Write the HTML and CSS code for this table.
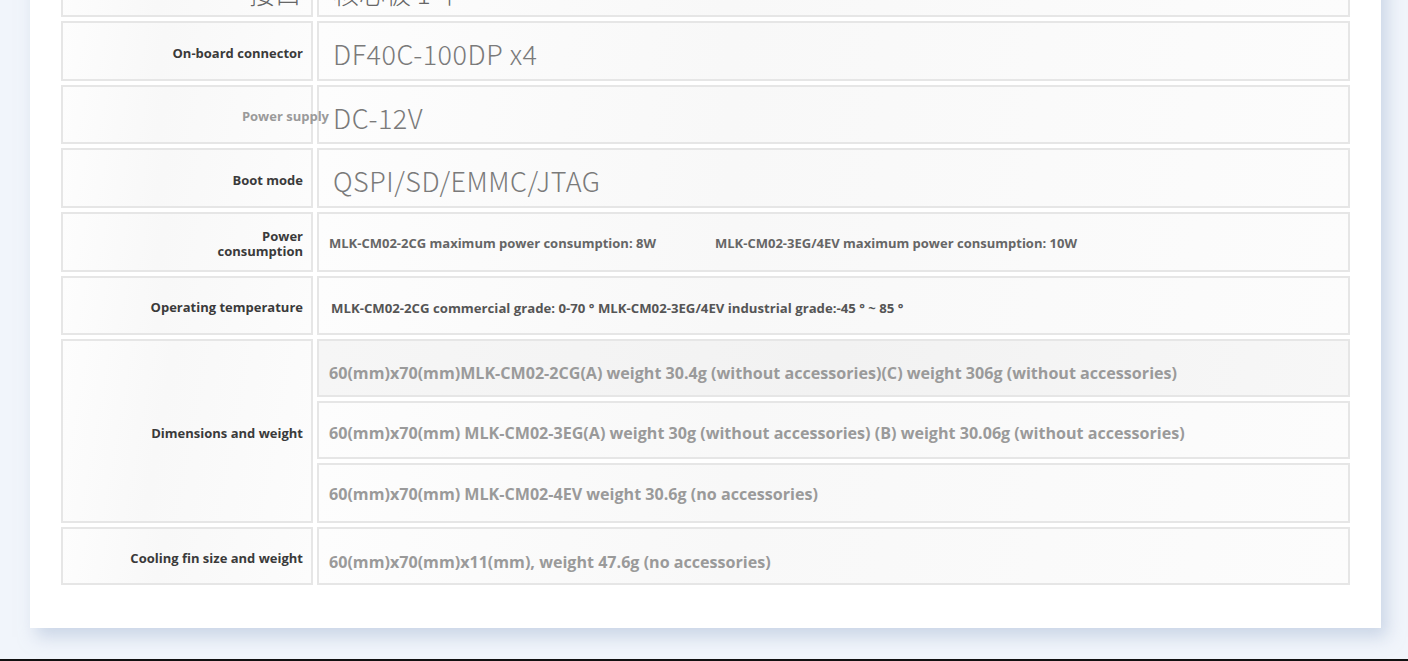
FILE: index.html
```html
<!DOCTYPE html>
<html lang="en">
<head>
<meta charset="utf-8">
<title>Specifications</title>
<link rel="stylesheet" href="styles.css">
</head>
<body>
<div class="page">
  <div class="card">
    <div class="spec">
      <div class="cell label top"><span class="cjk">接口</span></div>
      <div class="cell value top"><span class="cjk">核心板 1 个</span></div>

      <div class="cell label"><span class="lbl">On-board connector</span></div>
      <div class="cell value bigcell"><span class="big">DF40C-100DP x4</span></div>

      <div class="cell label"><span class="lbl faint overflow">Power supply</span></div>
      <div class="cell value bigcell"><span class="big">DC-12V</span></div>

      <div class="cell label"><span class="lbl">Boot mode</span></div>
      <div class="cell value bigcell"><span class="big">QSPI/SD/EMMC/JTAG</span></div>

      <div class="cell label"><span class="lbl">Power<br>consumption</span></div>
      <div class="cell value small-pad"><span class="sm">MLK-CM02-2CG maximum power consumption: 8W</span><span class="sm gap2">MLK-CM02-3EG/4EV maximum power consumption: 10W</span></div>

      <div class="cell label"><span class="lbl">Operating temperature</span></div>
      <div class="cell value temp"><span class="sm xs">MLK-CM02-2CG commercial grade: 0-70 ° MLK-CM02-3EG/4EV industrial grade:-45 ° ~ 85 °</span></div>

      <div class="cell label span3"><span class="lbl">Dimensions and weight</span></div>
      <div class="cell value dimcell shade"><span class="dim">60(mm)x70(mm)MLK-CM02-2CG(A) weight 30.4g (without accessories)(C) weight 306g (without accessories)</span></div>
      <div class="cell value dimcell mid"><span class="dim">60(mm)x70(mm) MLK-CM02-3EG(A) weight 30g (without accessories) (B) weight 30.06g (without accessories)</span></div>
      <div class="cell value dimcell high"><span class="dim">60(mm)x70(mm) MLK-CM02-4EV weight 30.6g (no accessories)</span></div>

      <div class="cell label"><span class="lbl">Cooling fin size and weight</span></div>
      <div class="cell value dimcell low"><span class="dim">60(mm)x70(mm)x11(mm), weight 47.6g (no accessories)</span></div>
    </div>
  </div>
  <div class="spacer"></div>
  <div class="edge"></div>
</div>
</body>
</html>
```

FILE: styles.css
```css
html, body {
  margin: 0;
  padding: 0;
}
body {
  background: #f1f5fb;
  font-family: "Open Sans", "Noto Sans", sans-serif;
  overflow: hidden;
}
.page {
  height: 661px;
  display: flex;
  flex-direction: column;
  overflow: hidden;
}
.card {
  margin-top: -43px;
  margin-left: 30px;
  width: 1351px;
  box-sizing: border-box;
  padding: 0 31px 43px 31px;
  background: #ffffff;
  box-shadow: 6px 9px 16px rgba(165, 184, 212, 0.5);
  flex: none;
}
.spec {
  display: grid;
  grid-template-columns: 252px 1033px;
  grid-template-rows: 60px 60px 59px 60px 60px 59px 58px 58px 60px 58px;
  column-gap: 4px;
  row-gap: 4px;
}
.cell {
  box-sizing: border-box;
  border: 2px solid #e6e6e6;
  background: linear-gradient(100deg, #fdfdfd 0%, #f8f8f8 40%, #fcfcfc 100%);
  display: flex;
  align-items: center;
  min-width: 0;
  padding-top: 4px;
}
.label {
  justify-content: flex-end;
  padding-right: 8px;
  text-align: right;
}
.value {
  padding-left: 10px;
}
.value.small-pad {
  padding-top: 2px;
}
.value.bigcell {
  padding-left: 14px;
  padding-top: 5px;
}
.value.temp {
  padding-left: 12px;
  padding-top: 5px;
}
.value.dimcell {
  padding-left: 10px;
  padding-top: 10px;
}
.value.dimcell.mid {
  padding-top: 6px;
}
.value.dimcell.high {
  padding-top: 2px;
}
.value.dimcell.low {
  padding-top: 12px;
}
.value.shade {
  background: linear-gradient(100deg, #f6f6f6 0%, #f2f2f2 50%, #f7f7f7 100%);
}
.span3 {
  grid-row: span 3;
}
.top {
  align-items: flex-start;
  padding-top: 0;
}
.lbl {
  font-family: "Open Sans", sans-serif;
  font-weight: 700;
  font-size: 13px;
  line-height: 15px;
  color: #3a3a3a;
}
.lbl.faint {
  color: #9a9a9a;
  font-size: 13px;
}
.lbl.overflow {
  margin-right: -26px;
  white-space: nowrap;
  position: relative;
  z-index: 1;
}
.big {
  font-family: "Noto Sans CJK SC", "Noto Sans", sans-serif;
  font-weight: 300;
  font-size: 27px;
  color: #7a7a7a;
  letter-spacing: 0.5px;
  white-space: nowrap;
}
.cjk {
  font-family: "Noto Sans CJK SC", sans-serif;
  font-size: 26px;
  font-weight: 300;
  color: #666;
  line-height: 26px;
  margin-top: 21px;
  white-space: nowrap;
}
.value.top {
  padding-left: 14px;
}
.label.top {
  padding-right: 10px;
}
.sm {
  font-family: "Open Sans", sans-serif;
  font-weight: 700;
  font-size: 13px;
  color: #666;
  white-space: nowrap;
}
.sm.xs {
  font-size: 13.2px;
  color: #555;
}
.gap2 {
  margin-left: 59px;
}
.dim {
  font-family: "Open Sans", sans-serif;
  font-weight: 700;
  font-size: 16.1px;
  color: #9a9a9a;
  white-space: nowrap;
}
.spacer {
  flex: 1;
}
.edge {
  height: 2px;
  background: #111;
  flex: none;
}
```
